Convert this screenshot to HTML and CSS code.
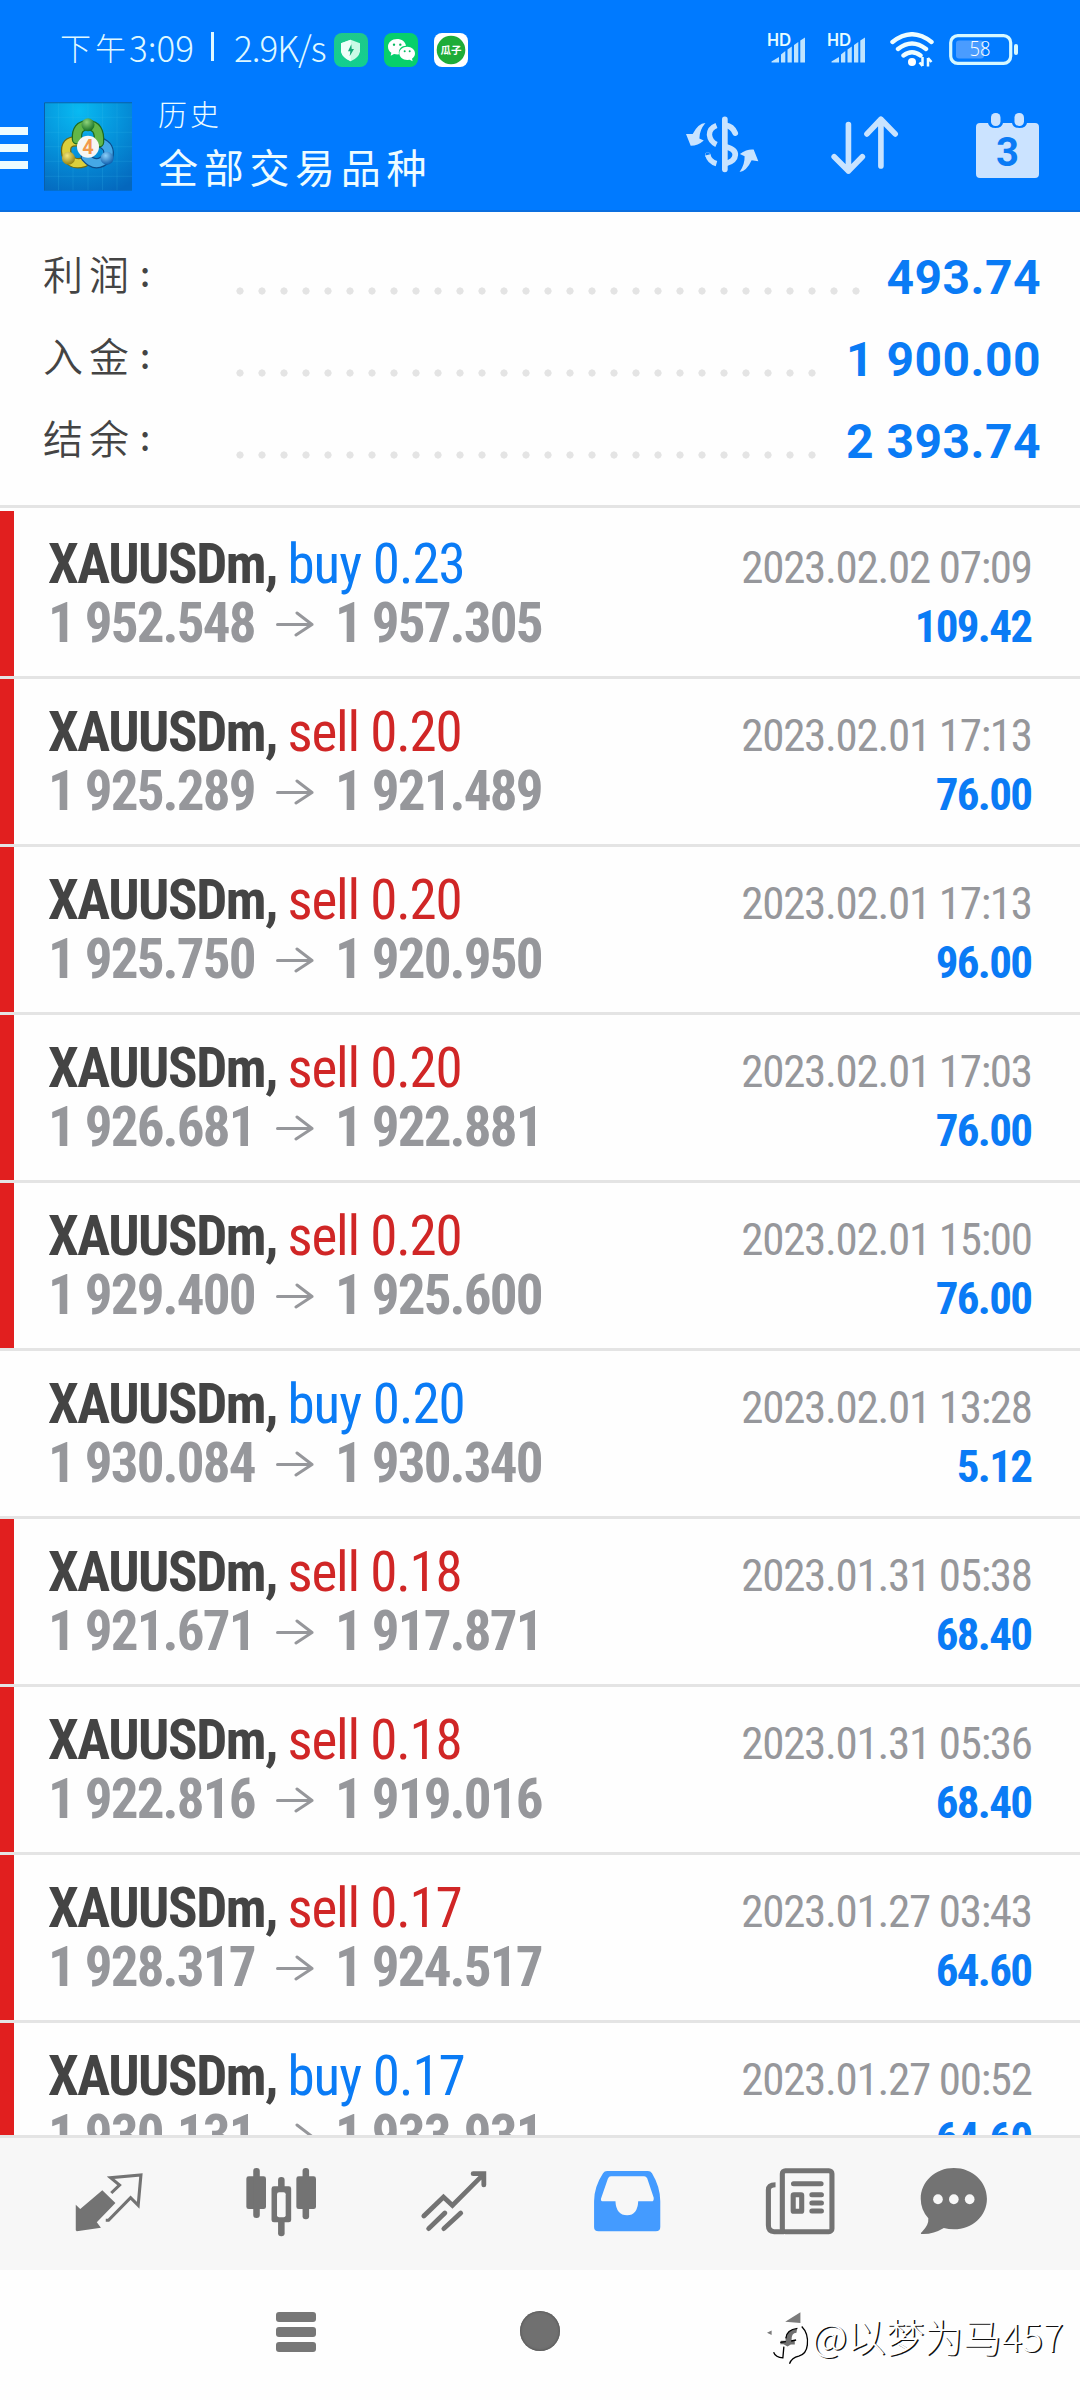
FILE: index.html
```html
<!DOCTYPE html>
<html lang="zh-CN">
<head>
<meta charset="utf-8">
<title>历史</title>
<link rel="stylesheet" href="styles.css">
</head>
<body>
<div class="phone">
  <header class="header">
    <div class="status">
      <span class="clock">下午<span class="latin">3:09</span><i class="sep"></i><span class="latin rate">2.9K/s</span></span>
      <svg class="app-badge" viewBox="42 36 102 102"><defs><linearGradient id="g1" x1="0" y1="0" x2="0" y2="1"><stop offset="0" stop-color="#1fc98a"/><stop offset="1" stop-color="#12cf90"/></linearGradient></defs><rect x="42" y="36" width="102" height="102" rx="24" fill="url(#g1)"/><path d="M92 56 120 67V92Q116 110 92 121 68 110 63 92V67Z" fill="#c9fbe6"/><path d="M92 56V121Q68 110 63 92V67Z" fill="#effff9"/><path d="M94 70 84 91H91L89 106 102 84H95Z" fill="#12a877"/></svg>
      <svg class="app-badge" viewBox="192 36 102 102"><rect x="192" y="36" width="102" height="102" rx="24" fill="#07cf6c"/><path d="M231 54c-15 0-27 10-27 23 0 8 4 14 10 18l-2 9 10-5q8 2 15 1c-3-16 8-26 21-26-2-12-13-20-27-20Z" fill="#fff"/><path d="M262 77c-14 0-24 9-24 20s10 20 24 20l7-1 9 5-2-8c6-4 9-9 9-16 0-11-10-20-23-20Z" fill="#fff"/><circle cx="222" cy="71" r="3.5" fill="#07b860"/><circle cx="241" cy="71" r="3.5" fill="#07b860"/><circle cx="254" cy="91" r="3" fill="#07b860"/><circle cx="269" cy="91" r="3" fill="#07b860"/></svg>
      <svg class="app-badge" viewBox="0 0 34 34"><rect width="34" height="34" rx="8" fill="#fff"/><circle cx="17" cy="17" r="14.3" fill="#1fac38"/><text x="17" y="21.3" class="guazi" text-anchor="middle">瓜子</text></svg>
      <span class="grow"></span>
      <svg class="signal" viewBox="0 0 40 32"><text x="0" y="12" class="hd" textLength="24" lengthAdjust="spacingAndGlyphs">HD</text><path d="M4.500 28.500V27.500L12 23V28.500ZM14 28.500V20.500L18.300 17V28.500ZM20.500 28.500V15.500L24.800 12.500V28.500ZM27 28.500V11L31.300 8V28.500ZM33.300 28.500V6.500L38 3.500V28.500Z" fill="#bfe4ff"/></svg>
      <svg class="signal" viewBox="0 0 40 32"><text x="0" y="12" class="hd" textLength="24" lengthAdjust="spacingAndGlyphs">HD</text><path d="M4.500 28.500V27.500L12 23V28.500ZM14 28.500V20.500L18.300 17V28.500ZM20.500 28.500V15.500L24.800 12.500V28.500ZM27 28.500V11L31.300 8V28.500ZM33.300 28.500V6.500L38 3.500V28.500Z" fill="#bfe4ff"/></svg>
      <svg class="wifi" viewBox="0 0 44 36"><g fill="none" stroke="#effdff" stroke-width="4.400" stroke-linecap="round"><path d="M2.500 10Q22-5.500 41.500 10M8 17Q22 6 36 17M13.500 23.500Q22 17 30.500 23.500"/></g><circle cx="22" cy="30" r="4" fill="#fff"/><path d="M32.500 25v9M32.500 34l-3-3.500M38 34.500v-8.500M38 26l3.500 4" stroke="#effdff" stroke-width="2.500" fill="none"/></svg>
      <svg class="battery" viewBox="0 0 70 32"><rect x="1.700" y="1.700" width="60" height="27.600" rx="7" fill="none" stroke="#d6f8ff" stroke-width="3.200"/><rect x="7" y="6.500" width="28" height="18" rx="3" fill="#4a9cff"/><rect x="65" y="10" width="4" height="11" rx="2" fill="#d6f8ff"/><text x="20.500" y="22.300" class="pct" textLength="21" lengthAdjust="spacingAndGlyphs">58</text></svg>
    </div>
    <div class="toolbar">
      <div class="menu"><i></i><i></i><i></i></div>
      <svg class="app-icon" viewBox="0 0 88 88.500">
        <defs>
          <radialGradient id="sky" cx=".4" cy=".1" r="1"><stop offset="0" stop-color="#08baf2"/><stop offset=".5" stop-color="#0591da"/><stop offset="1" stop-color="#0467bd"/></radialGradient>
          <radialGradient id="gg" cx=".4" cy=".3" r=".7"><stop offset="0" stop-color="#8fd47a"/><stop offset="1" stop-color="#167125"/></radialGradient>
          <radialGradient id="yy" cx=".4" cy=".3" r=".7"><stop offset="0" stop-color="#f3e87e"/><stop offset="1" stop-color="#958310"/></radialGradient>
          <radialGradient id="bb" cx=".4" cy=".3" r=".7"><stop offset="0" stop-color="#8bd0fa"/><stop offset="1" stop-color="#0e5fae"/></radialGradient>
        </defs>
        <rect width="88" height="88.500" fill="url(#sky)"/>
        <path d="M14.500 0V88M29 0V88M44 0V88M58.500 0V88M73 0V88M0 15H88M0 30H88M0 44.500H88M0 59H88M0 74H88" stroke="#3fc0f0" stroke-opacity=".18" fill="none"/>
        <path d="M.5 88V.5H88" stroke="#0b5fa8" fill="none"/>
        <g fill="none" stroke-linecap="round">
          <path d="M34 39Q20 38 22.500 52 27 64 40 60" stroke="#6d6a12" stroke-width="10.500"/><path d="M34 39Q20 38 22.500 52 27 64 40 60" stroke="#dccf3c" stroke-width="8"/>
          <path d="M56 40Q67 44 64 55 52 67 42 55" stroke="#0b4c8a" stroke-width="10.500"/><path d="M56 40Q67 44 64 55 52 67 42 55" stroke="#45a8e6" stroke-width="8"/>
          <path d="M33 37Q32 23 44 23 56 23 55 40" stroke="#1d6a20" stroke-width="10.500"/><path d="M33 37Q32 23 44 23 56 23 55 40" stroke="#62b647" stroke-width="8"/>
        </g>
        <circle cx="44" cy="22.500" r="6.500" fill="url(#gg)"/><circle cx="24.500" cy="56" r="6.500" fill="url(#yy)"/><circle cx="63" cy="56" r="6.500" fill="url(#bb)"/>
        <circle cx="44" cy="44.500" r="11" fill="#f6f6f4"/>
        <text x="44" y="51.500" class="four" text-anchor="middle">4</text>
      </svg>
      <div class="titles"><div class="sub">历史</div><div class="title">全部交易品种</div></div>
      <span class="grow"></span>
      <svg class="ic-swap" viewBox="48 48 218 170"><g fill="none" stroke="#c8e3ff"><path d="M164 58V207" stroke-width="17" stroke-linecap="round"/><path d="M167 76Q186 78 195 99" stroke-width="17" stroke-linecap="round"/><path d="M167 140Q197 148 195 165 194 183 167 190" stroke-width="17"/><path d="M139 76Q118 84 118 104 120 124 139 133" stroke-width="16"/><path d="M113 164Q118 184 139 190" stroke-width="16"/><circle cx="113" cy="164" r="0.500" stroke-width="15"/></g><path d="M106 69Q84 70 68 102L48 102 62 137Q84 137 101 121L88 115Q88 90 106 69ZM208 215Q228 214 244 180L264 183 250 148Q230 146 209 161L223 168Q224 193 208 215Z" fill="#c8e3ff"/></svg>
      <svg class="ic-sort" viewBox="484 48 204 178"><path d="M536 74V214M493 171 536 214 578 171M634 199V58M592 102 634 58 677 102" fill="none" stroke="#c8e3ff" stroke-width="17" stroke-linecap="round" stroke-linejoin="round"/></svg>
      <svg class="ic-cal" viewBox="0 0 63 66"><path d="M4 10H12Q13 15 19.500 15T27 10H36Q37 15 43.500 15T51 10H59Q63 10 63 14V61Q63 65 59 65H4Q0 65 0 61V14Q0 10 4 10Z" fill="#cbe3ff"/><rect x="15" y="0" width="9.500" height="13" rx="4.500" fill="#cbe3ff"/><rect x="38.500" y="0" width="9.500" height="13" rx="4.500" fill="#cbe3ff"/><text x="31.500" y="52.500" class="cal-day" text-anchor="middle">3</text></svg>
    </div>
  </header>

  <section class="summary">
    <div class="sum-row"><span class="label">利润<b>:</b></span><span class="dots"></span><span class="amount">493.74</span></div>
    <div class="sum-row"><span class="label">入金<b>:</b></span><span class="dots"></span><span class="amount">1 900.00</span></div>
    <div class="sum-row"><span class="label">结余<b>:</b></span><span class="dots"></span><span class="amount">2 393.74</span></div>
  </section>

  <main class="deals">
    <article class="deal mark"><div class="line"><span class="symbol">XAUUSDm,</span><span class="buy">buy 0.23</span><time>2023.02.02 07:09</time></div><div class="line"><span class="price">1 952.548</span><svg class="arrow" viewBox="0 0 38 26"><path d="M1.500 13.500H36M21 2 36 13.500 20 24" /></svg><span class="price">1 957.305</span><span class="profit">109.42</span></div></article>
    <article class="deal mark"><div class="line"><span class="symbol">XAUUSDm,</span><span class="sell">sell 0.20</span><time>2023.02.01 17:13</time></div><div class="line"><span class="price">1 925.289</span><svg class="arrow" viewBox="0 0 38 26"><path d="M1.500 13.500H36M21 2 36 13.500 20 24" /></svg><span class="price">1 921.489</span><span class="profit">76.00</span></div></article>
    <article class="deal mark"><div class="line"><span class="symbol">XAUUSDm,</span><span class="sell">sell 0.20</span><time>2023.02.01 17:13</time></div><div class="line"><span class="price">1 925.750</span><svg class="arrow" viewBox="0 0 38 26"><path d="M1.500 13.500H36M21 2 36 13.500 20 24" /></svg><span class="price">1 920.950</span><span class="profit">96.00</span></div></article>
    <article class="deal mark"><div class="line"><span class="symbol">XAUUSDm,</span><span class="sell">sell 0.20</span><time>2023.02.01 17:03</time></div><div class="line"><span class="price">1 926.681</span><svg class="arrow" viewBox="0 0 38 26"><path d="M1.500 13.500H36M21 2 36 13.500 20 24" /></svg><span class="price">1 922.881</span><span class="profit">76.00</span></div></article>
    <article class="deal mark"><div class="line"><span class="symbol">XAUUSDm,</span><span class="sell">sell 0.20</span><time>2023.02.01 15:00</time></div><div class="line"><span class="price">1 929.400</span><svg class="arrow" viewBox="0 0 38 26"><path d="M1.500 13.500H36M21 2 36 13.500 20 24" /></svg><span class="price">1 925.600</span><span class="profit">76.00</span></div></article>
    <article class="deal"><div class="line"><span class="symbol">XAUUSDm,</span><span class="buy">buy 0.20</span><time>2023.02.01 13:28</time></div><div class="line"><span class="price">1 930.084</span><svg class="arrow" viewBox="0 0 38 26"><path d="M1.500 13.500H36M21 2 36 13.500 20 24" /></svg><span class="price">1 930.340</span><span class="profit">5.12</span></div></article>
    <article class="deal mark"><div class="line"><span class="symbol">XAUUSDm,</span><span class="sell">sell 0.18</span><time>2023.01.31 05:38</time></div><div class="line"><span class="price">1 921.671</span><svg class="arrow" viewBox="0 0 38 26"><path d="M1.500 13.500H36M21 2 36 13.500 20 24" /></svg><span class="price">1 917.871</span><span class="profit">68.40</span></div></article>
    <article class="deal mark"><div class="line"><span class="symbol">XAUUSDm,</span><span class="sell">sell 0.18</span><time>2023.01.31 05:36</time></div><div class="line"><span class="price">1 922.816</span><svg class="arrow" viewBox="0 0 38 26"><path d="M1.500 13.500H36M21 2 36 13.500 20 24" /></svg><span class="price">1 919.016</span><span class="profit">68.40</span></div></article>
    <article class="deal mark"><div class="line"><span class="symbol">XAUUSDm,</span><span class="sell">sell 0.17</span><time>2023.01.27 03:43</time></div><div class="line"><span class="price">1 928.317</span><svg class="arrow" viewBox="0 0 38 26"><path d="M1.500 13.500H36M21 2 36 13.500 20 24" /></svg><span class="price">1 924.517</span><span class="profit">64.60</span></div></article>
    <article class="deal mark"><div class="line"><span class="symbol">XAUUSDm,</span><span class="buy">buy 0.17</span><time>2023.01.27 00:52</time></div><div class="line"><span class="price">1 930.131</span><svg class="arrow" viewBox="0 0 38 26"><path d="M1.500 13.500H36M21 2 36 13.500 20 24" /></svg><span class="price">1 933.931</span><span class="profit">64.60</span></div></article>
  </main>

  <nav class="tabs">
    <svg viewBox="211 500 203 210" preserveAspectRatio="none"><path d="M219 613 232 626 296 570 334 608 280 666 292 682 222 693 219 690Z" fill="#737373"/><path d="M306 660H314L378 592 400 615 408 524 320 532 346 554 322 578" fill="none" stroke="#737373" stroke-width="9"/></svg>
    <svg viewBox="714 500 203 210" preserveAspectRatio="none"><g fill="#737373"><rect x="715" y="528" width="57" height="98" rx="7"/><rect x="860" y="528" width="57" height="98" rx="7"/><rect x="735" y="503" width="19" height="150" rx="9"/><rect x="878" y="503" width="19" height="154" rx="9"/><rect x="807" y="530" width="19" height="178" rx="9"/><rect x="788" y="558" width="57" height="108" rx="7"/></g><rect x="804" y="576" width="25" height="75" rx="6" fill="#f7f7f7"/></svg>
    <svg viewBox="1217 500 203 210" preserveAspectRatio="none"><path d="M1231 647 1288 590 1314 615 1402 524M1374 520H1405V554M1245 685 1292 638M1289 685 1338 638" fill="none" stroke="#737373" stroke-width="14" stroke-linecap="round"/></svg>
    <svg viewBox="152 500 203 210" preserveAspectRatio="none"><path d="M196 512H314Q322 512 326 519 350 560 350 603V680Q350 693 337 693H171Q158 693 158 680V603Q158 560 184 519 188 512 196 512Z" fill="#449bff"/><path d="M207 528H303Q309 528 312 534L331 592Q332 603 325 603H286Q284 645 254 645 222 645 220 603H184Q177 603 178 595L198 535Q201 528 207 528Z" fill="#f7f7f7"/></svg>
    <svg viewBox="654 500 206 210" preserveAspectRatio="none"><g fill="none" stroke="#737373" stroke-width="15" stroke-linecap="round"><rect x="705" y="511" width="146" height="183" rx="9"/><path d="M685 553Q664 553 664 569V675Q664 694 681 694H710" stroke-linecap="butt"/><path d="M738 550H819M792 583H820M792 608H820M792 632H820"/><rect x="737" y="583" width="25" height="50" rx="2"/></g></svg>
    <svg class="chat" viewBox="1098 500 203 210" preserveAspectRatio="none"><path d="M1199 503C1253 503 1295 544 1295 595S1253 687 1199 687Q1184 687 1170 683 1138 703 1105 701 1101 699 1107 694 1127 674 1125 654 1103 628 1103 595C1103 544 1145 503 1199 503Z" fill="#737373"/><g fill="#f7f7f7"><ellipse cx="1153" cy="597" rx="14" ry="15"/><ellipse cx="1199" cy="597" rx="14" ry="15"/><ellipse cx="1245" cy="597" rx="14" ry="15"/></g></svg>
  </nav>

  <footer class="sysnav">
    <div class="recent"><i></i><i></i><i></i></div>
    <div class="home"></div>
    <svg class="back" viewBox="50 30 130 162"><path d="M105 62 151 33V66ZM50 95 64 88V102Z" fill="#7b7b7b"/><path d="M92 119H134V131H122L112 137 100 130H90ZM106 119Q106 84 141 84L139 95Q123 95 124 120L112 137 104 128Z" fill="#6f6f6f"/><path d="M107 112Q109 86 142 82M90 124 107 122M123 120 138 117" fill="none" stroke="#000" stroke-width="4"/><path d="M70 154Q76 170 98 171L101 137M155 76Q176 97 172 132 169 160 146 166 125 170 118 189" fill="none" stroke="#000" stroke-width="4"/></svg>
    <div class="watermark">@以梦为马457</div>
  </footer>
</div>
</body>
</html>
```
FILE: styles.css
```css
* { box-sizing: border-box; }
body { margin: 0; background: #fff; }
svg, i { display: block; flex: none; }
.grow { flex: 1; }
.phone {
  width: 1080px; height: 2400px; overflow: hidden; background: #fefefe;
  display: flex; flex-direction: column;
  font-family: Roboto, "Noto Sans CJK SC", sans-serif;
}

/* header */
.header { height: 212px; flex: none; background: #007aff; border-bottom: 2px solid #0a6fe0; }
.status { height: 95px; padding: 4px 61px 0 60px; display: flex; align-items: center; }
.clock {
  width: 274px; display: flex; align-items: center; white-space: nowrap; margin-top: -6px;
  font: 300 31px/40px "Noto Sans CJK SC", sans-serif; letter-spacing: 4px; color: #dff8ff;
}
.latin { font-size: 35px; letter-spacing: 0; margin-left: -1px; }
.sep { width: 3px; height: 29px; margin: 0 21px 0 17px; background: #dff8ff; }
.rate { letter-spacing: -1px; }
.app-badge { width: 34px; height: 34px; margin-right: 16px; }
.guazi { font: 700 10.5px "Noto Sans CJK SC", sans-serif; fill: #fff; }
.signal { width: 40px; height: 32px; margin-right: 20px; overflow: visible; }
.hd { font: 700 16.500px Lato, sans-serif; fill: #e6fdff; }
.wifi { width: 44px; height: 36px; margin: 0 15px 0 3px; }
.battery { width: 70px; height: 32px; }
.pct { font: 300 21px "Open Sans", sans-serif; fill: #fff; }

.toolbar { height: 115px; padding-right: 41px; display: flex; align-items: flex-start; }
.menu { width: 44px; padding-top: 32px; display: grid; gap: 9px; }
.menu i { width: 28px; height: 8px; background: #edfcff; }
.app-icon { width: 88px; height: 89px; margin-top: 7px; }
.four { font: 700 20px Roboto, sans-serif; fill: #f2994a; }
.titles { margin-left: 26px; margin-top: -2px; font-family: "Noto Sans CJK SC", sans-serif; color: #edfcff; }
.sub { font-size: 29px; line-height: 40px; font-weight: 300; letter-spacing: 3px; }
.title { font-size: 40px; line-height: 56px; letter-spacing: 5.700px; margin-top: 5px; }
.ic-swap { width: 73px; height: 57px; margin: 21px 72px 0 0; }
.ic-sort { width: 68px; height: 59px; margin: 21px 77px 0 0; }
.ic-cal { width: 63px; height: 66px; margin-top: 18px; }
.cal-day { font: 700 40px Roboto, sans-serif; fill: #0a7bf5; }

/* totals */
.summary { height: 296px; flex: none; padding: 22px 39px 0 43px; border-bottom: 3px solid #e4e4e4; }
.sum-row { height: 82px; display: flex; align-items: center; }
.label {
  width: 186px; display: flex; align-items: center; padding-bottom: 5px;
  font: 350 40px/60px "Noto Sans CJK SC", sans-serif; letter-spacing: 6px; color: #444;
}
.label b { font-weight: 500; font-size: 34px; margin-left: 5px; }
.dots {
  flex: 1; height: 8px; margin: 32px 20px 0 0;
  background: radial-gradient(circle at 11px 4px, #e4e4e4 3.300px, transparent 3.900px) 0 0 / 22px 8px repeat-x;
}
.amount { font-weight: 700; font-size: 48px; line-height: 60px; letter-spacing: .5px; color: #0a7bf5; padding-top: 5px; }

/* deals */
.deals { height: 1627px; flex: none; padding-top: 3px; overflow: hidden; font-family: "Roboto Condensed", Roboto, sans-serif; }
.deal { height: 168px; padding: 24px 48px 0; border-bottom: 3px solid #e4e4e4; }
.mark { box-shadow: inset 14px 0 #e11f1f; }
.line { height: 59px; display: flex; align-items: baseline; font-size: 55px; line-height: 59px; white-space: pre; }
.symbol { width: 239.500px; font-weight: 700; letter-spacing: -1.500px; color: #444; }
.buy { letter-spacing: -1px; color: #0a7bf5; }
.sell { letter-spacing: -1.200px; color: #d02626; }
time { margin: 0 -1px 0 auto; padding-right: 1.300px; font-size: 45px; letter-spacing: -1.300px; color: #96979b; }
.price { font-weight: 700; color: #96979b; width: 208px; letter-spacing: -1.850px; }
.arrow { width: 38px; height: 26px; margin: 0 21px 0 20px; align-self: flex-start; position: relative; top: 17px; fill: none; stroke: #96979b; stroke-width: 3; stroke-linecap: round; stroke-linejoin: round; }
.profit { margin: 0 -1px 0 auto; padding-right: 1.700px; font-size: 45px; letter-spacing: -1.700px; font-weight: 700; color: #0a7bf5; }

/* bottom tabs */
.tabs {
  height: 135px; flex: none; padding: 29px 0 0 73px; border-top: 3px solid #e4e4e4; background: #f7f7f7;
  display: flex; gap: 103px;
}
.tabs svg { width: 70px; height: 70px; }
.tabs .chat { margin-left: -19px; }

/* system navigation */
.sysnav { height: 130px; flex: none; display: flex; align-items: flex-start; padding-top: 41px; background: #fefefe; }
.recent { width: 40px; margin: 1px 0 0 276px; display: grid; gap: 5px; }
.recent i { height: 10px; border-radius: 3px; background: #777; }
.home { width: 40px; height: 40px; margin-left: 204px; border-radius: 50%; background: #707070; box-shadow: inset 0 0 2px 1px #5c5c5c; }
.back { width: 43px; height: 54px; margin-left: 207px; }
.watermark {
  margin: -4px 0 0 2px; font: 300 38.600px/56px "Noto Sans CJK SC", sans-serif; color: #fff; white-space: nowrap;
  text-shadow: 1.500px 1px 0 #111;
}
```
